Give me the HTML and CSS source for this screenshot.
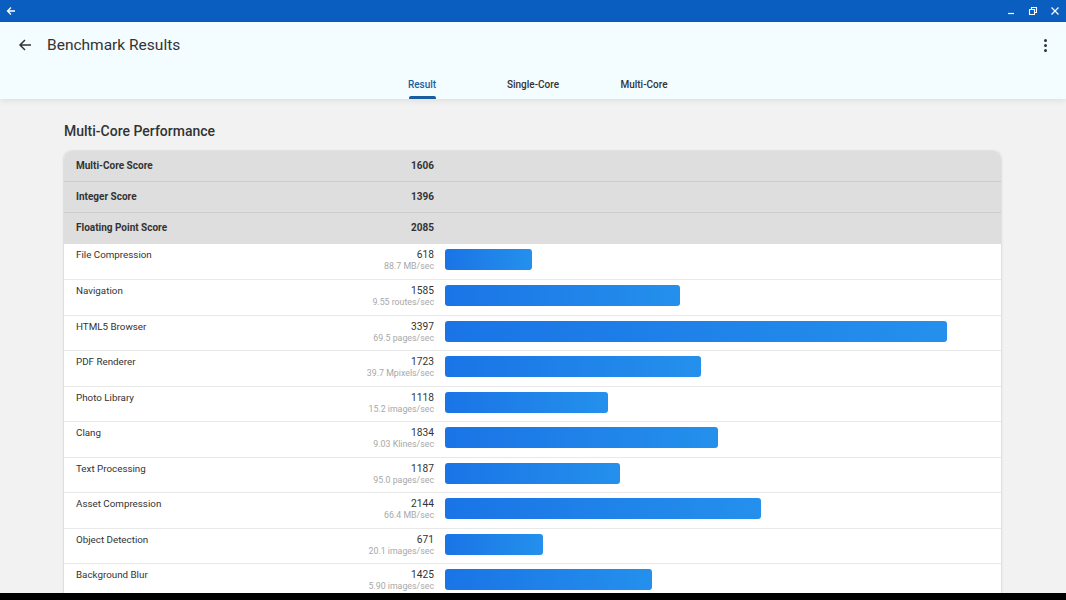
FILE: index.html
```html
<!DOCTYPE html>
<html lang="en">
<head>
<meta charset="utf-8">
<title>Benchmark Results</title>
<link rel="stylesheet" href="styles.css">
</head>
<body>
<div class="window">
  <div class="titlebar">
    <svg class="tb-back" viewBox="0 0 10 10" width="10" height="10"><path d="M9 5H1.5M5 1.5L1.5 5 5 8.5" fill="none" stroke="#fff" stroke-width="1.3"/></svg>
    <div class="tb-controls">
      <svg viewBox="0 0 10 10" width="10" height="10"><path d="M2 7.5h6" stroke="#fff" stroke-width="1.2"/></svg>
      <svg viewBox="0 0 10 10" width="10" height="10"><path d="M1.5 3.5h5v5h-5z M3.5 3.5V1.5h5v5h-2" fill="none" stroke="#fff" stroke-width="1.1"/></svg>
      <svg viewBox="0 0 10 10" width="10" height="10"><path d="M1.5 1.5l7 7M8.5 1.5l-7 7" stroke="#fff" stroke-width="1.2"/></svg>
    </div>
  </div>

  <header class="appbar">
    <div class="toolbar">
      <svg class="back" viewBox="0 0 14 14" width="14" height="14"><path d="M13 7H2M7 2L2 7l5 5" fill="none" stroke="#333" stroke-width="1.5"/></svg>
      <h1 class="title">Benchmark Results</h1>
      <div class="kebab"><span></span><span></span><span></span></div>
    </div>
    <nav class="tabs">
      <div class="tab active">Result</div>
      <div class="tab">Single-Core</div>
      <div class="tab">Multi-Core</div>
    </nav>
  </header>

  <main class="content">
    <h2 class="section-title">Multi-Core Performance</h2>
    <div class="card">
      <div class="summary-row"><div class="summary-info"><span>Multi-Core Score</span><span>1606</span></div></div>
      <div class="summary-row"><div class="summary-info"><span>Integer Score</span><span>1396</span></div></div>
      <div class="summary-row"><div class="summary-info"><span>Floating Point Score</span><span>2085</span></div></div>

      <div class="row">
        <div class="info"><span class="name">File Compression</span><div class="score"><div class="val">618</div><div class="rate">88.7 MB/sec</div></div></div>
        <div class="track"><div class="bar" style="width:87px"></div></div>
      </div>
      <div class="row">
        <div class="info"><span class="name">Navigation</span><div class="score"><div class="val">1585</div><div class="rate">9.55 routes/sec</div></div></div>
        <div class="track"><div class="bar" style="width:235px"></div></div>
      </div>
      <div class="row">
        <div class="info"><span class="name">HTML5 Browser</span><div class="score"><div class="val">3397</div><div class="rate">69.5 pages/sec</div></div></div>
        <div class="track"><div class="bar" style="width:502px"></div></div>
      </div>
      <div class="row">
        <div class="info"><span class="name">PDF Renderer</span><div class="score"><div class="val">1723</div><div class="rate">39.7 Mpixels/sec</div></div></div>
        <div class="track"><div class="bar" style="width:256px"></div></div>
      </div>
      <div class="row">
        <div class="info"><span class="name">Photo Library</span><div class="score"><div class="val">1118</div><div class="rate">15.2 images/sec</div></div></div>
        <div class="track"><div class="bar" style="width:163px"></div></div>
      </div>
      <div class="row">
        <div class="info"><span class="name">Clang</span><div class="score"><div class="val">1834</div><div class="rate">9.03 Klines/sec</div></div></div>
        <div class="track"><div class="bar" style="width:273px"></div></div>
      </div>
      <div class="row">
        <div class="info"><span class="name">Text Processing</span><div class="score"><div class="val">1187</div><div class="rate">95.0 pages/sec</div></div></div>
        <div class="track"><div class="bar" style="width:175px"></div></div>
      </div>
      <div class="row">
        <div class="info"><span class="name">Asset Compression</span><div class="score"><div class="val">2144</div><div class="rate">66.4 MB/sec</div></div></div>
        <div class="track"><div class="bar" style="width:316px"></div></div>
      </div>
      <div class="row">
        <div class="info"><span class="name">Object Detection</span><div class="score"><div class="val">671</div><div class="rate">20.1 images/sec</div></div></div>
        <div class="track"><div class="bar" style="width:98px"></div></div>
      </div>
      <div class="row">
        <div class="info"><span class="name">Background Blur</span><div class="score"><div class="val">1425</div><div class="rate">5.90 images/sec</div></div></div>
        <div class="track"><div class="bar" style="width:207px"></div></div>
      </div>
    </div>
  </main>
  <div class="bottom-edge"></div>
</div>
</body>
</html>
```
FILE: styles.css
```css
* { box-sizing: border-box; }

html, body {
  margin: 0;
  padding: 0;
}

body {
  font-family: Roboto, "Liberation Sans", sans-serif;
  color: #333;
  background: #f2f2f2;
}

.window {
  width: 1066px;
  height: 600px;
  display: flex;
  flex-direction: column;
  overflow: hidden;
}

/* system title bar */
.titlebar {
  flex: 0 0 22px;
  background: #0a5ec0;
  display: flex;
  align-items: center;
  justify-content: space-between;
  padding: 0 6px 0 6px;
}

.tb-back { display: block; }

.tb-controls {
  display: flex;
  gap: 12px;
}

.tb-controls svg { display: block; }

/* app bar */
.appbar {
  flex: 0 0 77px;
  background: #f3fcff;
  box-shadow: 0 2px 6px rgba(0, 0, 0, 0.08);
  position: relative;
  z-index: 1;
  display: flex;
  flex-direction: column;
}

.toolbar {
  height: 46px;
  display: flex;
  align-items: center;
  padding: 0 16px 0 18px;
}

.back { display: block; }

.title {
  margin: 0 0 0 15px;
  font-size: 15.5px;
  font-weight: 400;
  color: #333;
  flex: 1;
}

.kebab {
  display: flex;
  flex-direction: column;
  gap: 2px;
  width: 8px;
  align-items: center;
  margin-right: 1px;
}

.kebab span {
  width: 3px;
  height: 3px;
  border-radius: 50%;
  background: #333;
}

.tabs {
  height: 31px;
  display: flex;
  justify-content: center;
}

.tab {
  width: 111px;
  text-align: center;
  font-size: 10px;
  font-weight: 500;
  color: #333;
  padding-top: 11px;
  position: relative;
}

.tab.active { color: #1b5e9f; }

.tab.active::after {
  content: "";
  position: absolute;
  left: 42px;
  right: 42px;
  bottom: 0;
  height: 3px;
  border-radius: 2px 2px 0 0;
  background: #1b5e9f;
}

/* page content */
.content {
  flex: 1;
  overflow: hidden;
  padding: 0 65px 0 64px;
}

.section-title {
  margin: 22px 0 0 0;
  font-size: 14px;
  font-weight: 500;
  color: #333;
  line-height: 20px;
  height: 30px;
}

.card {
  background: #fff;
  border-radius: 8px 8px 0 0;
  overflow: hidden;
  box-shadow: 0 0 2px rgba(0, 0, 0, 0.18), 0 1px 4px rgba(0, 0, 0, 0.06);
}

.summary-row {
  height: 31px;
  background: #dedede;
  border-bottom: 1px solid #cdcdcd;
  display: flex;
  align-items: center;
  padding-bottom: 2px;
}

.summary-row:nth-child(3) { border-bottom: none; }

.summary-info {
  width: 370px;
  padding-left: 12px;
  display: flex;
  justify-content: space-between;
  font-size: 10px;
  font-weight: 700;
  color: #333;
}

.row {
  height: 35.45px;
  display: flex;
  border-top: 1px solid #e8e8e8;
}

.summary-row + .row { border-top: none; }

.info {
  flex: 0 0 370px;
  display: flex;
  justify-content: space-between;
  padding: 4px 0 0 12px;
}

.name {
  font-size: 9.8px;
  line-height: 13px;
  color: #333;
}

.score { text-align: right; }

.val {
  font-size: 10.2px;
  line-height: 13px;
  color: #333;
}

.rate {
  font-size: 8.8px;
  line-height: 11px;
  color: #a8a8a8;
}

.track {
  flex: 1;
  padding: 5px 0 0 11px;
}

.bar {
  height: 21px;
  border-radius: 3px;
  background: linear-gradient(90deg, #1a74e6 0%, #2490ec 100%);
}

.bottom-edge {
  flex: 0 0 7px;
  background: #000;
}
```
